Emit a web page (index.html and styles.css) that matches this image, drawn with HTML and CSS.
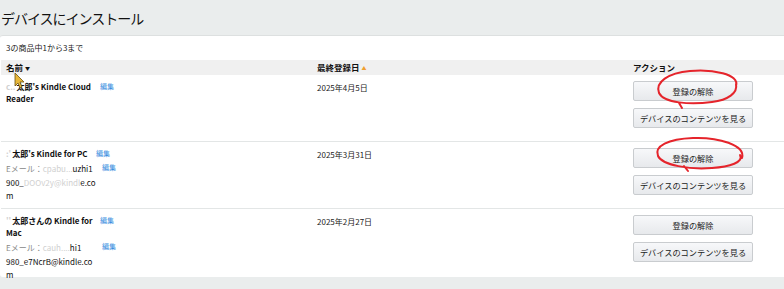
FILE: index.html
```html
<!DOCTYPE html>
<html lang="ja">
<head>
<meta charset="utf-8">
<link rel="stylesheet" href="styles.css">
</head>
<body>
<div class="page">
  <h1 class="title">デバイスにインストール</h1>
  <div class="card">
    <div class="count">3の商品中1から3まで</div>
    <div class="row head">
      <div class="c1">名前 <span class="tri down">▼</span></div>
      <div class="c2">最終登録日 <span class="tri up">▲</span></div>
      <div class="c3">アクション</div>
    </div>
    <div class="row item">
      <div class="c1">
        <div class="line">
          <div class="name n1"><span class="blur">c..</span>太郎's Kindle Cloud Reader</div>
          <a class="edit">編集</a>
        </div>
      </div>
      <div class="c2 date">2025年4月5日</div>
      <div class="c3 actions">
        <button class="btn">登録の解除</button>
        <button class="btn">デバイスのコンテンツを見る</button>
      </div>
    </div>
    <div class="row item">
      <div class="c1">
        <div class="line">
          <div class="name n2"><span class="blur">:'</span>太郎's Kindle for PC</div>
          <a class="edit">編集</a>
        </div>
        <div class="line">
          <div class="mail"><span class="lbl">Eメール：</span><span class="blur">cpabu...</span>uzhi1<br>900_<span class="blur">DOOv2y@kindl</span>e.co<br>m</div>
          <a class="edit">編集</a>
        </div>
      </div>
      <div class="c2 date">2025年3月31日</div>
      <div class="c3 actions">
        <button class="btn">登録の解除</button>
        <button class="btn">デバイスのコンテンツを見る</button>
      </div>
    </div>
    <div class="row item last">
      <div class="c1">
        <div class="line">
          <div class="name n1"><span class="blur">''</span>太郎さんの Kindle for Mac</div>
          <a class="edit">編集</a>
        </div>
        <div class="line">
          <div class="mail"><span class="lbl">Eメール：</span><span class="blur">cauh....</span>hi1<br>980_e7NcrB@kindle.co<br>m</div>
          <a class="edit">編集</a>
        </div>
      </div>
      <div class="c2 date">2025年2月27日</div>
      <div class="c3 actions">
        <button class="btn">登録の解除</button>
        <button class="btn">デバイスのコンテンツを見る</button>
      </div>
    </div>
  </div>
</div>
<svg class="overlay" width="784" height="289" viewBox="0 0 784 289">
  <path d="M736,86 C740,74 712,69 690,71 C668,73 655,82 659,93 C664,103 690,105 712,102 C728,100 738,93 736,84 M679,103 L682,108" fill="none" stroke="#e5242b" stroke-width="2" stroke-linecap="round"/>
  <path d="M742,158 C746,145 718,137 693,138 C668,139 654,146 658,156 C662,165 690,170 712,168 C730,167 744,162 740,155 M684,166 L688,171" fill="none" stroke="#e5242b" stroke-width="2" stroke-linecap="round"/>
  <path d="M15,73 L15,86 L18,83 L20,88 L22,87 L20,82 L24,82 Z" fill="#e8b83a" stroke="#6b5210" stroke-width="0.8"/>
</svg>
</body>
</html>
```

FILE: styles.css
```css
* { box-sizing: border-box; }
html, body { margin: 0; padding: 0; }
body {
  width: 784px;
  height: 289px;
  overflow: hidden;
  background: #eaeded;
  font-family: "Noto Sans CJK JP", "Noto Sans", "DejaVu Sans", sans-serif;
  color: #111;
  position: relative;
}
.page { padding: 7px 0 0 1px; }
.title {
  margin: 0 0 6px 0;
  font-size: 14px;
  font-weight: 400;
  line-height: 22px;
  letter-spacing: -1px;
  color: #111;
}
.card {
  background: #fff;
  border-top: 1px solid #dde0e0;
  border-radius: 3px;
  width: 800px;
  margin-left: -1px;
  padding-left: 1px;
}
.count {
  font-size: 8px;
  line-height: 12px;
  padding: 6px 6px 5px 5px;
  color: #222;
}
.row {
  display: grid;
  grid-template-columns: 311px 316px 1fr;
  padding-left: 5px;
}
.head {
  background: #f0f0f0;
  font-size: 8.5px;
  font-weight: 700;
  line-height: 14px;
  height: 15px;
  margin-top: 1px;
}
.tri { font-size: 5px; vertical-align: 1px; }
.tri.up { color: #f0a030; }
.item {
  border-bottom: 1px solid #e3e6e6;
  font-size: 8px;
  line-height: 13px;
  height: 67px;
}
.item .c1, .item .c2 { padding-top: 6px; }
.item.last { border-bottom: none; height: 68px; }
.line { display: flex; align-items: flex-start; margin-bottom: 2px; }
.name {
  font-weight: 700;
  word-break: break-word;
  line-height: 12px;
}
.n1 { width: 93px; }
.n2 { width: 89px; }
.mail {
  width: 95px;
  white-space: nowrap;
  color: #111;
  line-height: 13.5px;
}
.lbl { color: #888; }
.blur { color: #d0d0d0; }
.name .blur { margin-right: 1px; }
.edit {
  color: #3a8fe0;
  font-size: 7px;
  line-height: 11px;
  margin-left: 1px;
}
.date { color: #222; }
.actions {
  display: flex;
  flex-direction: column;
  gap: 7px;
  padding-top: 6px;
}
.btn {
  width: 120px;
  height: 20px;
  font-family: inherit;
  font-size: 8.2px;
  color: #222;
  border: 1px solid #c9cccf;
  border-radius: 2px;
  background: linear-gradient(#f7f8fa, #e7e9ec);
  padding: 0;
}
.overlay {
  position: absolute;
  left: 0;
  top: 0;
  pointer-events: none;
}
```
